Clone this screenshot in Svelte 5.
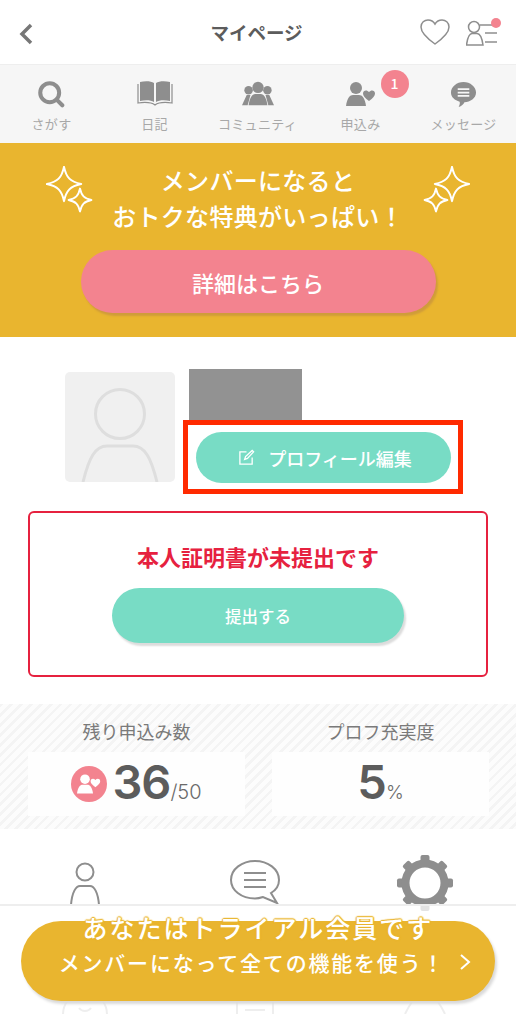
<script>
	const navItems = [
		{ label: 'さがす', icon: 'search' },
		{ label: '日記', icon: 'book' },
		{ label: 'コミュニティ', icon: 'people' },
		{ label: '申込み', icon: 'apply', badge: 1 },
		{ label: 'メッセージ', icon: 'message' }
	];
	const star = 'M0 -22 C3 -8 8 -3 22 0 C8 3 3 8 0 22 C-3 8 -8 3 -22 0 C-8 -3 -3 -8 0 -22 Z';
</script>

<div class="page">
	<header class="top">
		<svg class="back" width="16" height="24" viewBox="0 0 16 24"><path d="M13 3 L4 12 L13 21" /></svg>
		<h1>マイページ</h1>
		<div class="top-icons">
			<svg width="32" height="28" viewBox="0 0 32 28"><path class="thin" d="M16 26 C9 21 2 15 2 9 C2 4.500 5.500 2 9 2 C12 2 14.500 3.500 16 6 C17.500 3.500 20 2 23 2 C26.500 2 30 4.500 30 9 C30 15 23 21 16 26 Z" /></svg>
			<svg width="36" height="30" viewBox="0 0 36 30">
				<circle class="thin" cx="8" cy="9" r="5.500" />
				<path class="thin" d="M0.500 27 C1.500 20 3 15.500 6 15.500 L11 15.500 C14 15.500 16 20 17 27 Z" />
				<path class="thin" d="M14 7 H27 M19 15 H31 M19 24 H31" />
				<circle cx="30" cy="5" r="5" fill="#f3838f" />
			</svg>
		</div>
	</header>

	<nav class="tabs">
		{#each navItems as item}
			<div class="tab">
				<div class="tab-icon">
					{#if item.icon === 'search'}
						<svg width="27" height="27" viewBox="0 0 30 30"><circle cx="13" cy="13" r="10.500" fill="none" stroke="#8e8e8e" stroke-width="4.500" /><path d="M21 21 L27 27" stroke="#8e8e8e" stroke-width="4.500" stroke-linecap="round" /></svg>
					{:else if item.icon === 'book'}
						<svg width="36" height="26" viewBox="0 0 36 26"><path d="M3 1 C8 0 14 0 17 2 V21 C14 19 8 19 3 20 Z M33 1 C28 0 22 0 19 2 V21 C22 19 28 19 33 20 Z" fill="#8e8e8e" /><path d="M1 3 V22 C8 21 14 21 18 24 C22 21 28 21 35 22 V3" fill="none" stroke="#8e8e8e" stroke-width="1.200" /></svg>
					{:else if item.icon === 'people'}
						<svg width="32" height="26" viewBox="0 0 34 26"><circle cx="7" cy="9" r="4.500" fill="#8e8e8e" /><circle cx="27" cy="9" r="4.500" fill="#8e8e8e" /><path d="M0 25 L5 14 H9 L6 25 Z M34 25 L29 14 H25 L28 25 Z" fill="#8e8e8e" /><circle cx="17" cy="6" r="6" fill="#8e8e8e" /><path d="M7 25 C8 17 11 13 14 13 H20 C23 13 26 17 27 25 Z" fill="#8e8e8e" /></svg>
					{:else if item.icon === 'apply'}
						<svg width="30" height="26" viewBox="0 0 30 26"><circle cx="10" cy="7" r="6" fill="#8e8e8e" /><path d="M0 25 C1 17 4 14 7 14 H13 C16 14 19 17 20 25 Z" fill="#8e8e8e" /><path d="M23 20 C19 17 17 15 17 12.500 C17 9 21 8.500 23 11 C25 8.500 29 9 29 12.500 C29 15 27 17 23 20 Z" fill="#8e8e8e" /></svg>
					{:else}
						<svg width="27" height="27" viewBox="0 0 28 28"><path d="M14 1 C21 1 27 6 27 12 C27 18 21 22 15 22 C14 24 12 26 9 27 C10 25 10.500 23 10 21.500 C5 20 1 17 1 12 C1 6 7 1 14 1 Z" fill="#8e8e8e" /><path d="M8 8.500 H20 M8 12 H20 M8 15.500 H20" stroke="#f6f6f6" stroke-width="1.800" /></svg>
					{/if}
					{#if item.badge}<span class="badge">{item.badge}</span>{/if}
				</div>
				<span class="tab-label">{item.label}</span>
			</div>
		{/each}
	</nav>

	<section class="banner">
		<div class="banner-title">
			<svg class="sparkles" width="48" height="48" viewBox="0 0 48 48">
				<g fill="none" stroke="#fff" stroke-width="2.600" stroke-linejoin="round">
					<path d={star} transform="translate(18 18) scale(.78)" />
					<path d={star} transform="translate(34 34) scale(.52)" stroke-width="3.600" />
				</g>
			</svg>
			<p>メンバーになると<br />おトクな特典がいっぱい！</p>
			<svg class="sparkles" width="48" height="48" viewBox="0 0 48 48">
				<g fill="none" stroke="#fff" stroke-width="2.600" stroke-linejoin="round">
					<path d={star} transform="translate(30 18) scale(.78)" />
					<path d={star} transform="translate(14 34) scale(.52)" stroke-width="3.600" />
				</g>
			</svg>
		</div>
		<div class="detail-btn">詳細はこちら</div>
	</section>

	<section class="profile">
		<div class="avatar">
			<svg width="110" height="110" viewBox="0 0 110 110">
				<circle cx="55" cy="42" r="24.500" fill="none" stroke="#dedede" stroke-width="3" />
				<path d="M18 110 C24 86 30 74 42 74 H68 C80 74 86 86 92 110" fill="none" stroke="#dedede" stroke-width="3" />
			</svg>
		</div>
		<div class="profile-side">
			<div class="name-block"></div>
			<div class="edit-frame">
				<div class="edit-btn">
					<svg width="17" height="17" viewBox="0 0 18 18"><path d="M9 3 H2 V16 H15 V9 M7 11 L8 8 L15 1.500 L16.500 3 L10 10 Z" fill="none" stroke="#fff" stroke-width="1.400" /></svg>
					<span>プロフィール編集</span>
				</div>
			</div>
		</div>
	</section>

	<section class="notice">
		<p>本人証明書が未提出です</p>
		<div class="submit-btn">提出する</div>
	</section>

	<section class="stats">
		<div class="stat">
			<div class="stat-label">残り申込み数</div>
			<div class="stat-box">
				<span class="stat-icon">
					<svg width="24" height="22" viewBox="0 0 30 26"><circle cx="10" cy="7" r="6" fill="#fff" /><path d="M0 25 C1 17 4 14 7 14 H13 C16 14 19 17 20 25 Z" fill="#fff" /><path d="M23 17 C19 14 17 12 17 9.500 C17 6 21 5.500 23 8 C25 5.500 29 6 29 9.500 C29 12 27 14 23 17 Z" fill="#fff" /></svg>
				</span>
				<b>36</b><small>/50</small>
			</div>
		</div>
		<div class="stat">
			<div class="stat-label">プロフ充実度</div>
			<div class="stat-box"><b>5</b><small class="pct">%</small></div>
		</div>
	</section>

	<section class="menu">
		<svg class="menu-person" width="32" height="46" viewBox="0 0 32 46"><circle cx="16" cy="11" r="8.500" fill="none" stroke="#8e8e8e" stroke-width="2" /><path d="M2 44 C3 31 7 25 11 25 H21 C25 25 29 31 30 44 Z" fill="none" stroke="#8e8e8e" stroke-width="2" /></svg>
		<svg class="menu-chat" width="52" height="46" viewBox="0 0 52 46"><path d="M26 2 C39 2 50 10 50 21 C50 27 47 31 42 34 L48 44 L34 38 C31 39 29 39.500 26 39.500 C12 39.500 2 31 2 21 C2 10 13 2 26 2 Z" fill="none" stroke="#8e8e8e" stroke-width="2" /><path d="M15 14 H37 M15 21 H37 M15 28 H37" stroke="#8e8e8e" stroke-width="2" /></svg>
		<svg width="58" height="56" viewBox="0 0 58 56">
			<g fill="#8e8e8e">
				<rect x="24.500" y="0" width="9" height="56" rx="2" />
				<rect x="24.500" y="0" width="9" height="56" rx="2" transform="rotate(45 29 28)" />
				<rect x="24.500" y="0" width="9" height="56" rx="2" transform="rotate(90 29 28)" />
				<rect x="24.500" y="0" width="9" height="56" rx="2" transform="rotate(135 29 28)" />
			</g>
			<circle cx="29" cy="28" r="19.500" fill="#fff" stroke="#8e8e8e" stroke-width="8" />
		</svg>
		<svg class="faded" width="50" height="54" viewBox="0 0 50 54"><path d="M3 54 C3 50 5 44 8 40 M47 54 C47 50 45 44 42 40 M19 48 C22 52 28 52 31 48" fill="none" stroke="#8e8e8e" stroke-width="2" /></svg>
		<svg class="faded" width="40" height="54" viewBox="0 0 40 54"><path d="M2 40 V54 M38 40 V54 M10 50 H30" fill="none" stroke="#8e8e8e" stroke-width="2" /></svg>
		<svg class="faded" width="42" height="54" viewBox="0 0 42 54"><path d="M1 54 C3 50 5 46 8 42 M41 54 C39 50 37 46 34 42" fill="none" stroke="#8e8e8e" stroke-width="2" /></svg>
	</section>

	<footer class="cta-layer">
		<div class="cta">
			<div class="cta-first">あなたはトライアル会員です</div>
			<div class="cta-second">
				<span>メンバーになって全ての機能を使う！</span>
				<svg width="12" height="18" viewBox="0 0 12 18"><path d="M2 2 L10 9 L2 16" fill="none" stroke="#fff" stroke-width="2" /></svg>
			</div>
		</div>
	</footer>
</div>

<style>
	:global(body) {
		background: #fff;
	}
	.page {
		position: relative;
		width: 516px;
		height: 1024px;
		overflow: hidden;
		background: #fff;
		font-family: "Noto Sans CJK JP", "Noto Sans", sans-serif;
		color: #666;
	}
	.top {
		position: relative;
		height: 65px;
		display: flex;
		align-items: center;
		justify-content: center;
		border-bottom: 1px solid #eee;
		box-sizing: border-box;
		padding-right: 3px;
	}
	.top h1 {
		margin: 0;
		font-size: 18.500px;
		font-weight: 700;
		color: #5c5c5c;
	}
	.back {
		position: absolute;
		left: 18px;
		top: 22px;
	}
	.back path {
		fill: none;
		stroke: #777;
		stroke-width: 3.500;
	}
	.top-icons {
		position: absolute;
		left: 419px;
		top: 18px;
		display: flex;
		gap: 15px;
	}
	.thin {
		fill: none;
		stroke: #8e8e8e;
		stroke-width: 1.500;
	}
	.tabs {
		height: 78px;
		background: #f6f6f6;
		display: grid;
		grid-template-columns: repeat(5, 103px);
	}
	.tab {
		display: flex;
		flex-direction: column;
		align-items: center;
		padding-top: 14px;
	}
	.tab-icon {
		position: relative;
		height: 30px;
		display: flex;
		align-items: center;
		justify-content: center;
	}
	.tab-label {
		margin-top: 4px;
		font-size: 13px;
		line-height: 22px;
		letter-spacing: 0.300px;
		color: #a8a8a8;
		white-space: nowrap;
	}
	.badge {
		position: absolute;
		left: 35px;
		top: -9px;
		width: 28px;
		height: 28px;
		border-radius: 50%;
		background: #f3838f;
		color: #fff;
		font-size: 14px;
		font-weight: 500;
		line-height: 26px;
		text-align: center;
	}
	.banner {
		height: 194px;
		background: #e9b52f;
		display: flex;
		flex-direction: column;
		align-items: center;
		box-sizing: border-box;
		padding-top: 19px;
	}
	.banner-title {
		display: flex;
		align-items: flex-start;
		justify-content: center;
		gap: 14px;
		color: #fff;
		font-size: 24px;
		font-weight: 500;
		line-height: 36px;
		letter-spacing: 0.300px;
		text-align: center;
	}
	.banner-title p {
		margin: 0;
		width: 300px;
	}
	.sparkles {
		margin-top: 4px;
	}
	.detail-btn {
		margin-top: 16px;
		width: 355px;
		height: 63px;
		border-radius: 32px;
		background: #f3838f;
		box-shadow: 2px 3px 2px #d09c3a;
		color: #fff;
		font-size: 22px;
		font-weight: 500;
		line-height: 65px;
		text-align: center;
	}
	.profile {
		display: flex;
		padding: 32px 0 0 65px;
		height: 174px;
		box-sizing: border-box;
	}
	.avatar {
		width: 110px;
		height: 110px;
		margin-top: 3px;
		border-radius: 5px;
		overflow: hidden;
		background: #f0f0f0;
	}
	.avatar svg {
		display: block;
	}
	.profile-side {
		margin-left: 8px;
	}
	.name-block {
		width: 113px;
		height: 51px;
		margin-left: 6px;
		background: #929292;
	}
	.edit-frame {
		width: 280px;
		height: 74px;
		box-sizing: border-box;
		border: 5px solid #ff2a00;
		padding: 7px 7px 0 8px;
	}
	.edit-btn {
		height: 51px;
		border-radius: 26px;
		background: #78dcc5;
		color: #fff;
		display: flex;
		align-items: center;
		justify-content: center;
		gap: 13px;
		font-size: 18px;
		font-weight: 500;
		padding-left: 3px;
	}
	.notice {
		margin-left: 28px;
		width: 460px;
		height: 166px;
		box-sizing: border-box;
		border: 2px solid #e6213f;
		border-radius: 6px;
		display: flex;
		flex-direction: column;
		align-items: center;
	}
	.notice p {
		margin: 0;
		padding-top: 29px;
		font-size: 22px;
		font-weight: 700;
		line-height: 29px;
		color: #e6213f;
	}
	.submit-btn {
		margin-top: 17px;
		width: 292px;
		height: 55px;
		border-radius: 28px;
		background: #78dcc5;
		box-shadow: 2px 3px 2px #dcdcdc;
		color: #fff;
		font-size: 16.500px;
		font-weight: 500;
		line-height: 56px;
		text-align: center;
	}
	.stats {
		margin-top: 27px;
		height: 125px;
		box-sizing: border-box;
		padding: 13px 27px 0 28px;
		display: grid;
		grid-template-columns: 217px 217px;
		gap: 27px;
		background: repeating-linear-gradient(135deg, #f4f4f4 0 2.500px, #fcfcfc 2.500px 7px);
	}
	.stat-label {
		height: 35px;
		font-size: 18px;
		line-height: 28px;
		text-align: center;
		color: #7a7a7a;
	}
	.stat-box {
		height: 64px;
		background: #fefefe;
		display: flex;
		align-items: baseline;
		justify-content: center;
		color: #5c5c5c;
		font-family: "Inter", "Liberation Sans", sans-serif;
	}
	.stat-box b {
		font-size: 47px;
		font-weight: 600;
		line-height: 60px;
		letter-spacing: -1px;
	}
	.stat-box small {
		font-size: 20px;
		font-weight: 300;
		color: #6a6a6a;
	}
	.stat-box .pct {
		font-size: 19px;
	}
	.stat-icon {
		width: 36px;
		height: 36px;
		border-radius: 50%;
		background: #f3838f;
		display: flex;
		align-items: center;
		justify-content: center;
		align-self: center;
		margin-right: 5px;
	}
	.menu {
		display: grid;
		grid-template-columns: 170px 170px 170px;
		justify-items: center;
		align-items: start;
		row-gap: 49px;
		padding-top: 26px;
	}
	.menu-person {
		margin-top: 6px;
	}
	.menu-chat {
		margin-top: 4px;
	}
	.faded {
		opacity: 0.6;
	}
	.cta-layer {
		position: absolute;
		left: 0;
		top: 904px;
		width: 516px;
		height: 120px;
		background: rgba(255, 255, 255, 0.75);
		border-top: 2px solid #eee;
		box-sizing: border-box;
	}
	.cta {
		position: absolute;
		left: 21px;
		top: 15px;
		width: 474px;
		height: 80px;
		border-radius: 40px;
		background: #e9b52f;
		box-shadow: 2px 3px 3px #d9d9d9;
		color: #fff;
		text-align: center;
	}
	.cta-first {
		margin-top: -9px;
		font-size: 25px;
		font-weight: 500;
		line-height: 30px;
		letter-spacing: 2px;
		white-space: nowrap;
		text-shadow: 0 0 2px #e9b52f, 0 0 2px #e9b52f, 0 -1px 1px #e9b52f, 1px 0 1px #e9b52f, -1px 0 1px #e9b52f;
	}
	.cta-second {
		display: flex;
		align-items: center;
		justify-content: center;
		gap: 14px;
		margin-top: 3px;
		font-size: 21px;
		font-weight: 500;
		line-height: 34px;
		letter-spacing: 1.800px;
		white-space: nowrap;
		padding-left: 14px;
	}
</style>
